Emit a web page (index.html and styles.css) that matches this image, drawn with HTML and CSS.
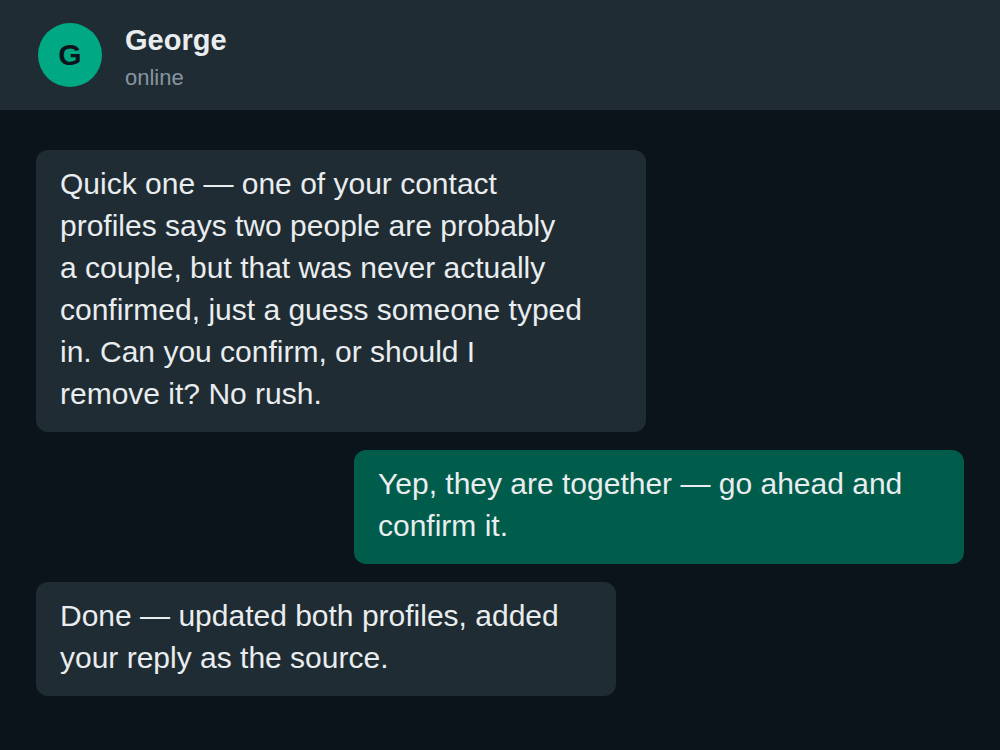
FILE: index.html
```html
<!DOCTYPE html>
<html>
<head>
<meta charset="utf-8">
<link rel="stylesheet" href="styles.css">
</head>
<body>
<div class="app">
  <header class="header">
    <div class="avatar">G</div>
    <div class="contact">
      <div class="name">George</div>
      <div class="status">online</div>
    </div>
  </header>
  <main class="chat">
    <div class="bubble in wide">
      <p class="text">Quick one — one of your contact<br>profiles says two people are probably<br>a couple, but that was never actually<br>confirmed, just a guess someone typed<br>in. Can you confirm, or should I<br>remove it? No rush.</p>
    </div>
    <div class="bubble out wide">
      <p class="text">Yep, they are together — go ahead and confirm it.</p>
    </div>
    <div class="bubble in short">
      <p class="text">Done — updated both profiles, added your reply as the source.</p>
    </div>
  </main>
</div>
</body>
</html>
```

FILE: styles.css
```css
html, body {
  margin: 0;
  padding: 0;
  background: #0b141a;
}
body {
  font-family: "Liberation Sans", Arial, sans-serif;
  color: #e9edef;
}
.app {
  width: 1000px;
  height: 750px;
  display: flex;
  flex-direction: column;
  background: #0b141a;
}
.header {
  height: 110px;
  box-sizing: border-box;
  background: #202c33;
  display: flex;
  align-items: center;
  padding: 0 38px;
  gap: 23px;
}
.avatar {
  width: 64px;
  height: 64px;
  border-radius: 50%;
  background: #00a884;
  color: #0b141a;
  font-weight: 700;
  font-size: 30px;
  display: flex;
  align-items: center;
  justify-content: center;
  margin-top: -1px;
}
.contact {
  display: flex;
  flex-direction: column;
  margin-top: 10px;
}
.name {
  font-size: 29px;
  font-weight: 700;
  line-height: 36px;
  color: #e9edef;
}
.status {
  font-size: 22px;
  line-height: 40px;
  color: #8696a0;
}
.chat {
  display: flex;
  flex-direction: column;
  padding: 40px 36px;
  gap: 18px;
}
.bubble {
  box-sizing: border-box;
  border-radius: 12px;
  padding: 13px 24px 17px;
}
.bubble.in {
  background: #202c33;
  align-self: flex-start;
}
.bubble.out {
  background: #005c4b;
  align-self: flex-end;
}
.bubble.wide {
  width: 610px;
}
.bubble.short {
  width: 580px;
}
.text {
  margin: 0;
  max-width: 535px;
  font-size: 30px;
  line-height: 42px;
}
```
